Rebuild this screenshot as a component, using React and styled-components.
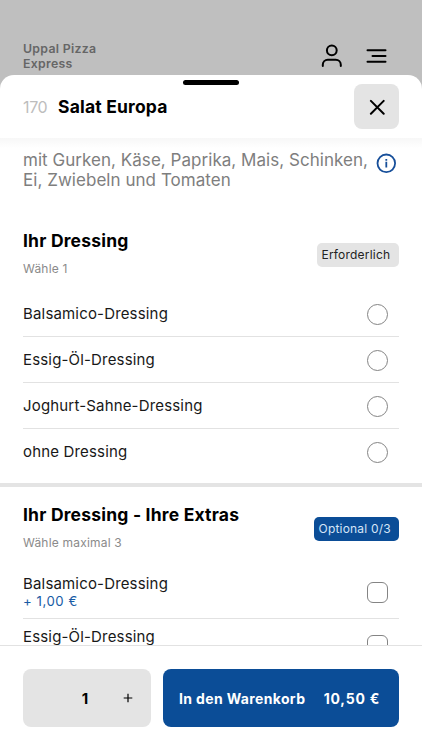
import React from "react";
import styled, { createGlobalStyle } from "styled-components";

const GlobalStyle = createGlobalStyle`
  * { box-sizing: border-box; }
  body { margin: 0; overflow: hidden; font-family: Inter, "Liberation Sans", sans-serif; color: #111; }
  button { font: inherit; color: inherit; border: 0; padding: 0; }
  h1, h2, p { margin: 0; }
`;

const Page = styled.main`
  display: flex;
  flex-direction: column;
  height: 750px;
  background: #bfbfbf;
`;

const TopBar = styled.header`
  display: flex;
  flex: 0 0 75px;
  padding: 41px 35px 0 23px;
  justify-content: space-between;
`;

const Brand = styled.div`
  font-size: 12.3px;
  font-weight: 600;
  line-height: 15px;
  letter-spacing: 0.3px;
  color: #666;
`;

const TopIcons = styled.div`
  display: flex;
  gap: 23px;
  padding-top: 2px;
  color: #000;
`;

const Sheet = styled.section`
  display: flex;
  flex: 1;
  flex-direction: column;
  min-height: 0;
  background: #fff;
  border-radius: 14px 14px 0 0;
  overflow: hidden;
`;

const SheetHeader = styled.div`
  display: grid;
  grid-template-rows: 9px 45px;
  flex: 0 0 63px;
  padding: 0 23px;
`;

const Handle = styled.div`
  align-self: end;
  justify-self: center;
  width: 56px;
  height: 5px;
  margin-bottom: -1px;
  border-radius: 3px;
  background: #000;
`;

const TitleRow = styled.div`
  display: flex;
  align-items: center;
`;

const DishNumber = styled.span`
  width: 35px;
  font-size: 16px;
  letter-spacing: -0.35px;
  color: #bdbdbd;
`;

const DishName = styled.h1`
  flex: 1;
  font-size: 17.5px;
  font-weight: 700;
  letter-spacing: 0.18px;
  color: #000;
`;

const CloseButton = styled.button`
  display: grid;
  place-items: center;
  width: 45px;
  height: 45px;
  border-radius: 8px;
  background: #e4e4e4;
  color: #000;
`;

const Content = styled.div`
  flex: 1;
  min-height: 0;
  overflow: hidden;
  background: linear-gradient(#f7f7f7, #fff 10px);
`;

const Description = styled.div`
  display: flex;
  justify-content: space-between;
  padding: 12px 26px 0 23px;
  height: 91px;
  color: #7e7e7e;
  font-size: 17px;
  line-height: 20px;
  letter-spacing: 0.04px;
  white-space: nowrap;
  svg { margin-top: 3px; }
`;

const GroupHead = styled.div`
  display: flex;
  justify-content: space-between;
  height: ${({ $height }) => $height}px;
  padding: 0 23px;
`;

const GroupTitle = styled.h2`
  font-size: 17.5px;
  font-weight: 700;
  line-height: 24px;
  letter-spacing: 0.2px;
  white-space: nowrap;
  color: #000;
`;

const Hint = styled.p`
  margin-top: 8px;
  font-size: 12px;
  line-height: 16px;
  letter-spacing: 0.2px;
  color: #8a8a8a;
`;

const Badge = styled.span`
  margin-top: 14px;
  height: 24px;
  width: ${({ $width }) => $width}px;
  padding-left: 4.5px;
  border-radius: 5px;
  font-size: 12px;
  line-height: 24px;
  letter-spacing: 0.2px;
  white-space: nowrap;
  color: ${({ $primary }) => ($primary ? "#d5e4f7" : "#222")};
  background: ${({ $primary }) => ($primary ? "#0b4d97" : "#e4e4e4")};
`;

const Option = styled.label`
  display: flex;
  justify-content: space-between;
  align-items: center;
  height: ${({ $height }) => $height}px;
  margin: 0 23px;
  padding: 1px 11px 0 0;
  border-bottom: 1px solid ${({ $last }) => ($last ? "transparent" : "#e2e2e2")};
`;

const OptionText = styled.div`
  min-height: ${({ $tall }) => ($tall ? 35 : 18)}px;
`;

const OptionName = styled.div`
  font-size: 15px;
  line-height: 18px;
  letter-spacing: 0.17px;
  white-space: nowrap;
  color: #181818;
`;

const Price = styled.div`
  font-size: 13.2px;
  line-height: 17px;
  letter-spacing: 0.55px;
  color: #185ba5;
`;

const Control = styled.span`
  width: 21px;
  height: 21px;
  border: 1px solid #848484;
  border-radius: ${({ $round }) => ($round ? "50%" : "6px")};
  background: #fff;
`;

const Separator = styled.div`
  height: 4px;
  margin: 8px 0 16px;
  background: #e4e4e4;
`;

const Footer = styled.footer`
  display: grid;
  grid-template-columns: 128px 236px;
  grid-template-rows: 58px;
  gap: 12px;
  flex: 0 0 105px;
  padding: 23px;
  border-top: 1px solid #e2e2e2;
  background: #fff;
`;

const Stepper = styled.div`
  display: grid;
  grid-template-columns: 41px 42px 44px;
  align-items: center;
  justify-items: center;
  border-radius: 8px;
  background: #e4e4e4;
  color: #000;
`;

const Quantity = styled.span`
  grid-column: 2;
  font-size: 15px;
  font-weight: 700;
`;

const CartButton = styled.button`
  display: flex;
  align-items: center;
  justify-content: space-between;
  padding: 1px 19px 0 16px;
  border-radius: 8px;
  background: #0b4d97;
  color: #fff;
  font-size: 14px;
  font-weight: 700;
  letter-spacing: 0.36px;
  white-space: nowrap;
`;

const Amount = styled.span`
  letter-spacing: 0.75px;
`;

const stroke = { fill: "none", stroke: "currentColor", strokeWidth: 2, strokeLinecap: "round" };

const UserIcon = () => (
  <svg width="22" height="26" viewBox="0 0 22 26" {...stroke}>
    <circle cx="10.8" cy="7.3" r="4.9" />
    <path d="M1.8 23v-1.2a5 5 0 0 1 5-5h8a5 5 0 0 1 5 5V23" />
  </svg>
);

const MenuIcon = () => (
  <svg width="21" height="26" viewBox="0 0 21 26" {...stroke}>
    <path d="M1.5 7.3h18M6.5 13h13M1.5 18.7h18" />
  </svg>
);

const CloseIcon = () => (
  <svg width="16" height="16" viewBox="0 0 16 16" {...stroke}>
    <path d="M1.9 1.9l12.8 12.8M14.7 1.9L1.9 14.7" />
  </svg>
);

const InfoIcon = () => (
  <svg width="20" height="20" viewBox="0 0 20 20" fill="none" stroke="#174f9a" strokeWidth="1.8">
    <circle cx="10.3" cy="10.3" r="8.8" />
    <path d="M10.3 8.8v5.7M10.3 5.9v1.8" />
  </svg>
);

const PlusIcon = () => (
  <svg width="10" height="10" viewBox="0 0 10 10" fill="none" stroke="currentColor" strokeWidth="1.2">
    <path d="M5 .7v8.6M.7 5h8.6" />
  </svg>
);

const dressings = ["Balsamico-Dressing", "Essig-Öl-Dressing", "Joghurt-Sahne-Dressing", "ohne Dressing"];
const extras = [
  { name: "Balsamico-Dressing", price: "+ 1,00 €" },
  { name: "Essig-Öl-Dressing" },
];

export default function App() {
  return (
    <Page>
      <GlobalStyle />
      <TopBar>
        <Brand>Uppal Pizza<br />Express</Brand>
        <TopIcons><UserIcon /><MenuIcon /></TopIcons>
      </TopBar>
      <Sheet>
        <SheetHeader>
          <Handle />
          <TitleRow>
            <DishNumber>170</DishNumber>
            <DishName>Salat Europa</DishName>
            <CloseButton aria-label="Schließen"><CloseIcon /></CloseButton>
          </TitleRow>
        </SheetHeader>
        <Content>
          <Description>
            <p>mit Gurken, Käse, Paprika, Mais, Schinken,<br />Ei, Zwiebeln und Tomaten</p>
            <InfoIcon />
          </Description>
          <GroupHead $height={62}>
            <div>
              <GroupTitle>Ihr Dressing</GroupTitle>
              <Hint>Wähle 1</Hint>
            </div>
            <Badge $width={82}>Erforderlich</Badge>
          </GroupHead>
          {dressings.map((name, i) => (
            <Option key={name} $height={46} $last={i === dressings.length - 1}>
              <OptionText>
                <OptionName>{name}</OptionName>
              </OptionText>
              <Control $round />
            </Option>
          ))}
          <Separator />
          <GroupHead $height={63}>
            <div>
              <GroupTitle>Ihr Dressing - Ihre Extras</GroupTitle>
              <Hint>Wähle maximal 3</Hint>
            </div>
            <Badge $primary $width={85}>Optional 0/3</Badge>
          </GroupHead>
          {extras.map(({ name, price }) => (
            <Option key={name} $height={53}>
              <OptionText $tall>
                <OptionName>{name}</OptionName>
                {price && <Price>{price}</Price>}
              </OptionText>
              <Control />
            </Option>
          ))}
        </Content>
        <Footer>
          <Stepper>
            <Quantity>1</Quantity>
            <PlusIcon />
          </Stepper>
          <CartButton>
            <span>In den Warenkorb</span>
            <Amount>10,50 €</Amount>
          </CartButton>
        </Footer>
      </Sheet>
    </Page>
  );
}
